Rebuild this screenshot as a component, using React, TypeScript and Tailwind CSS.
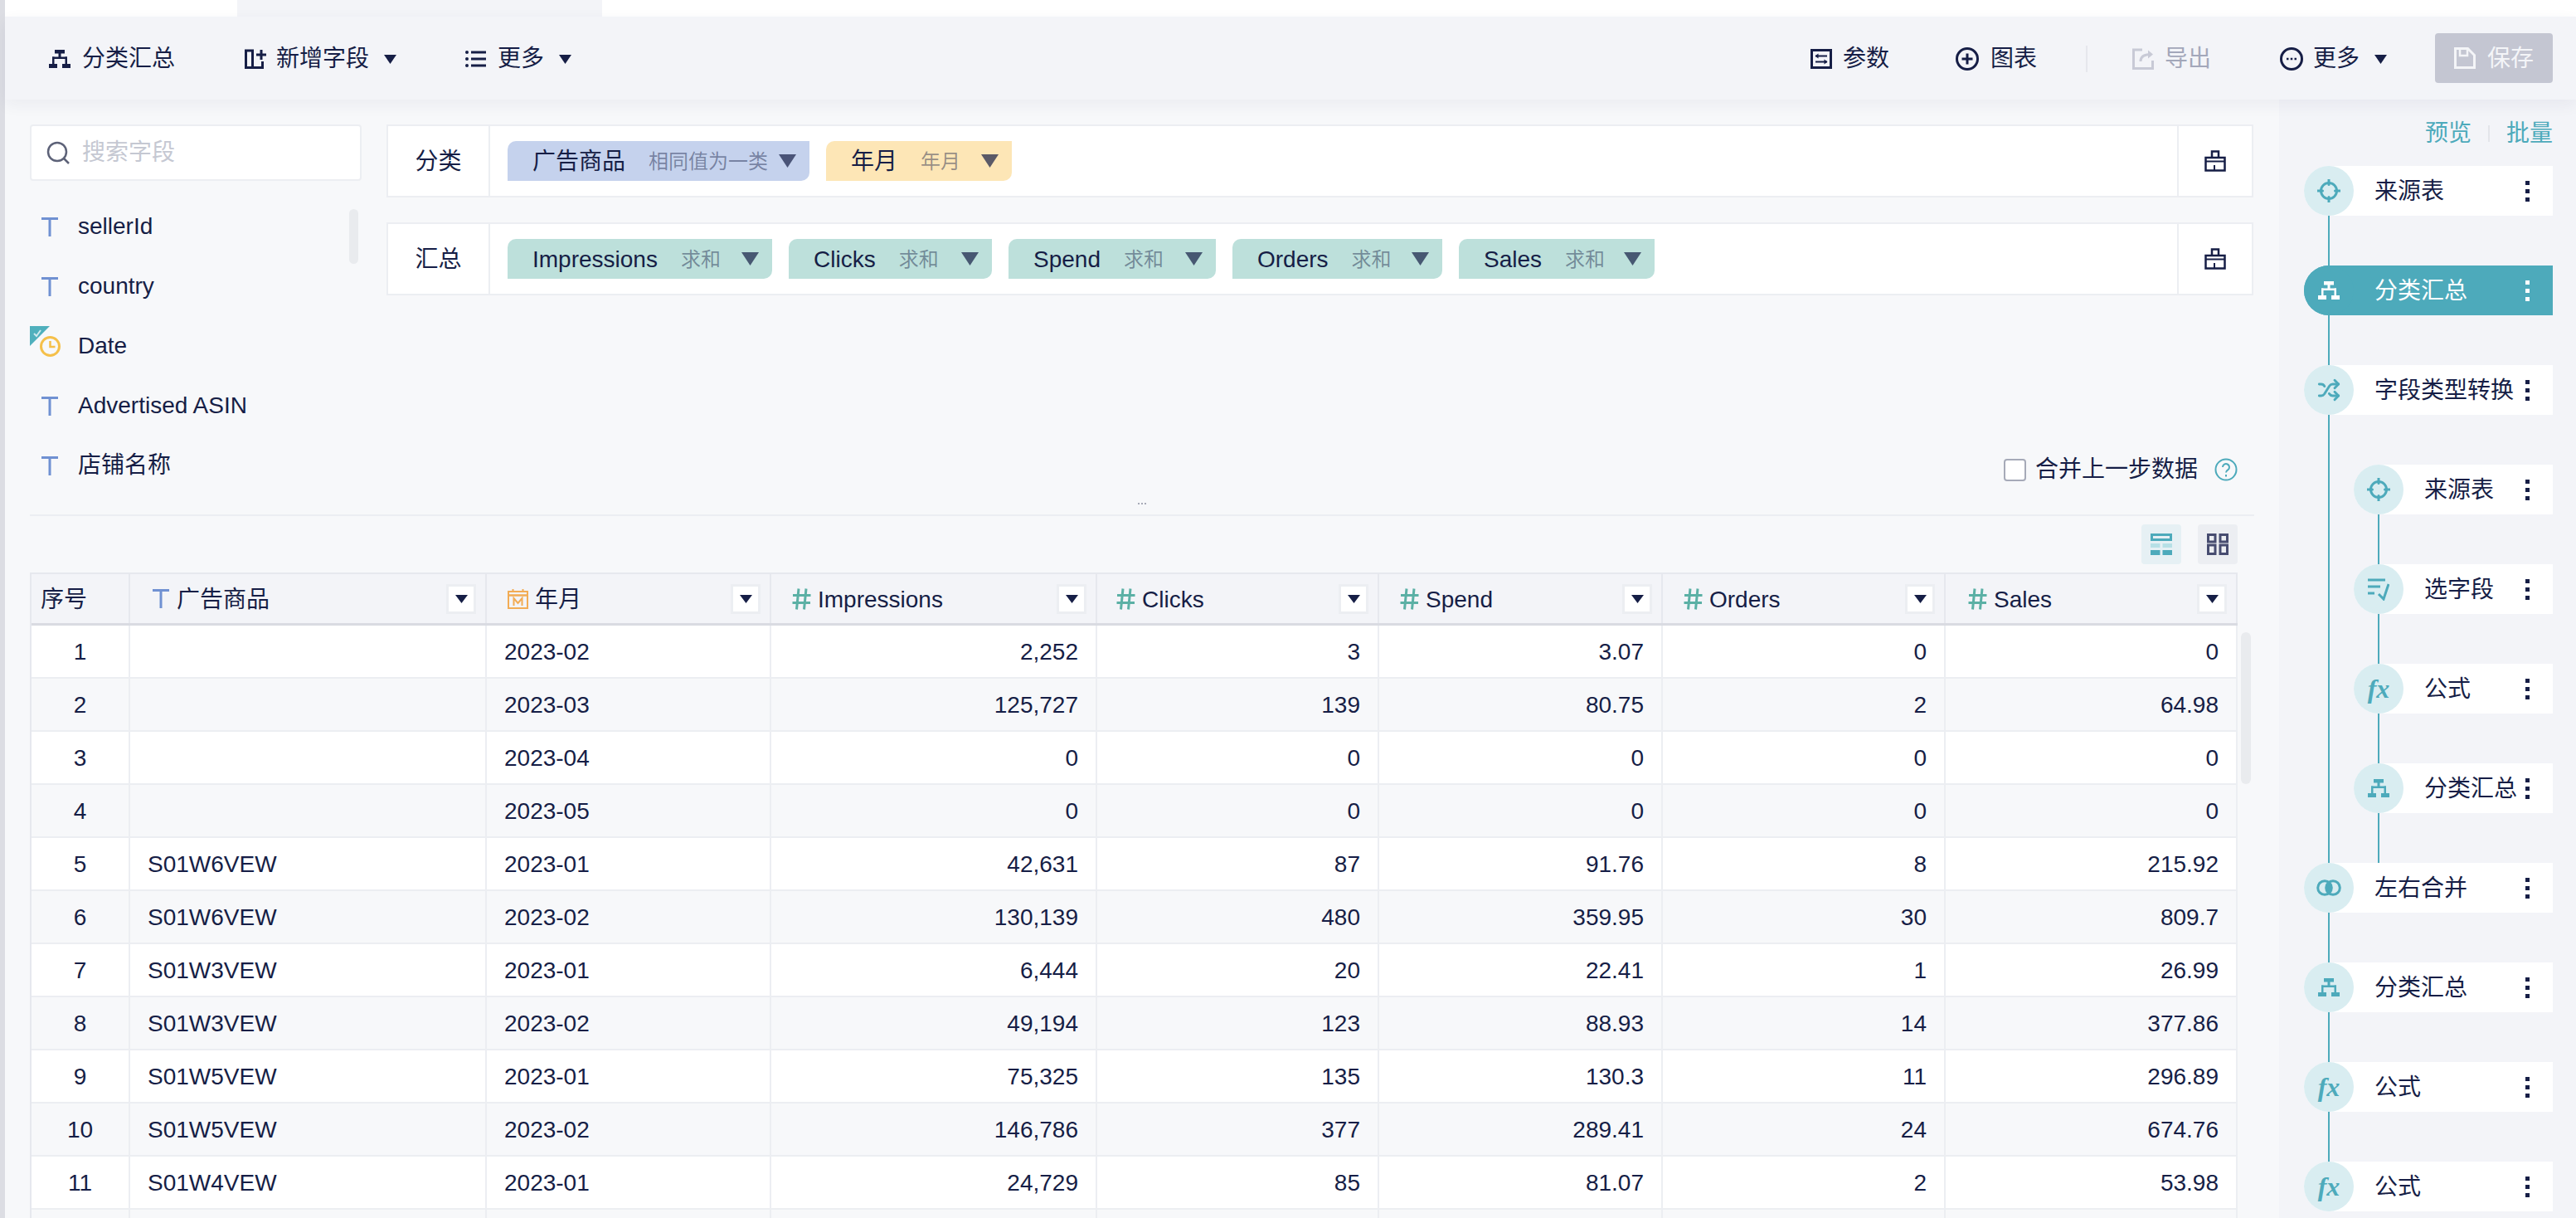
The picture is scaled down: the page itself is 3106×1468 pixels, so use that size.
import type { ReactNode } from 'react';
import { Shuffle } from 'lucide-react';

type ChipDef = { label: string; sub: string; width: string };

const groupChips: { label: string; sub: string; width: string; bg: string }[] = [
  { label: '广告商品', sub: '相同值为一类', width: 'w-[364px]', bg: 'bg-[#c5d2ed]' },
  { label: '年月', sub: '年月', width: 'w-[224px]', bg: 'bg-[#fde6b6]' },
];

const sumChips: ChipDef[] = [
  { label: 'Impressions', sub: '求和', width: 'w-[319px]' },
  { label: 'Clicks', sub: '求和', width: 'w-[245px]' },
  { label: 'Spend', sub: '求和', width: 'w-[250px]' },
  { label: 'Orders', sub: '求和', width: 'w-[253px]' },
  { label: 'Sales', sub: '求和', width: 'w-[236px]' },
];

const rows: string[][] = [
  ['1', '', '2023-02', '2,252', '3', '3.07', '0', '0'],
  ['2', '', '2023-03', '125,727', '139', '80.75', '2', '64.98'],
  ['3', '', '2023-04', '0', '0', '0', '0', '0'],
  ['4', '', '2023-05', '0', '0', '0', '0', '0'],
  ['5', 'S01W6VEW', '2023-01', '42,631', '87', '91.76', '8', '215.92'],
  ['6', 'S01W6VEW', '2023-02', '130,139', '480', '359.95', '30', '809.7'],
  ['7', 'S01W3VEW', '2023-01', '6,444', '20', '22.41', '1', '26.99'],
  ['8', 'S01W3VEW', '2023-02', '49,194', '123', '88.93', '14', '377.86'],
  ['9', 'S01W5VEW', '2023-01', '75,325', '135', '130.3', '11', '296.89'],
  ['10', 'S01W5VEW', '2023-02', '146,786', '377', '289.41', '24', '674.76'],
  ['11', 'S01W4VEW', '2023-01', '24,729', '85', '81.07', '2', '53.98'],
  ['', '', '', '', '', '', '', ''],
];

const gridCols = 'grid grid-cols-[119px_430px_343px_393px_340px_342px_341px_352px]';

function Tri({ className = 'w-[15px] h-[11px]', opacity = 1 }: { className?: string; opacity?: number }) {
  return (
    <svg viewBox="0 0 15 11" preserveAspectRatio="none" className={className} fill="currentColor" opacity={opacity}>
      <path d="M0 0h15L7.5 11z" />
    </svg>
  );
}

function TreeIcon({ className = 'w-[26px] h-[22px]' }: { className?: string }) {
  return (
    <svg viewBox="0 0 26 22" className={className} fill="currentColor">
      <rect x="7" y="0" width="12" height="4.5" />
      <rect x="11.5" y="4" width="3" height="6" />
      <rect x="4" y="8.5" width="18" height="2.5" />
      <rect x="4" y="8.5" width="2.5" height="9" />
      <rect x="19.5" y="8.5" width="2.5" height="9" />
      <rect x="0" y="17" width="10" height="5" />
      <rect x="16" y="17" width="10" height="5" />
    </svg>
  );
}

function AddFieldIcon() {
  return (
    <svg viewBox="0 0 26 24" className="w-[26px] h-[24px]" fill="none" stroke="currentColor" strokeWidth="3">
      <path d="M1.500 2h8v20.500h-8zM9.500 22.500H21.500V15" />
      <path d="M14 7h12M20 1v12" />
    </svg>
  );
}

function ListIcon() {
  return (
    <svg viewBox="0 0 25 24" className="w-[25px] h-[24px]" fill="currentColor">
      <rect x="0" y="2" width="4" height="4" rx="2" />
      <rect x="7" y="2.500" width="18" height="3" />
      <rect x="0" y="10" width="4" height="4" rx="2" />
      <rect x="7" y="10.500" width="18" height="3" />
      <rect x="0" y="18" width="4" height="4" rx="2" />
      <rect x="7" y="18.500" width="18" height="3" />
    </svg>
  );
}

function ParamIcon() {
  return (
    <svg viewBox="0 0 26 24" className="w-[26px] h-[24px]" fill="none" stroke="currentColor" strokeWidth="3">
      <rect x="1.500" y="1.500" width="23" height="21" />
      <path d="M6 8.500h14M6 15.500h14" strokeWidth="2" />
      <path d="M9.500 5.500v6L5.500 8.500zM16.500 12.500v6l4-3z" fill="currentColor" stroke="none" />
    </svg>
  );
}

function PlusCircleIcon() {
  return (
    <svg viewBox="0 0 28 28" className="w-[28px] h-[28px]" fill="none" stroke="currentColor" strokeWidth="3">
      <circle cx="14" cy="14" r="12.500" />
      <path d="M7.500 14h13M14 7.500v13" />
    </svg>
  );
}

function ExportIcon() {
  return (
    <svg viewBox="0 0 26 26" className="w-[26px] h-[26px]" fill="none" stroke="#c8cad6" strokeWidth="3">
      <path d="M12 2H1.500v22.500h23V15" />
      <path d="M10 16c0-6 4-8.500 12-8.500" />
      <path d="M19 2.500l6 5-6 5" fill="#c8cad6" stroke="none" />
    </svg>
  );
}

function DotsCircleIcon() {
  return (
    <svg viewBox="0 0 28 28" className="w-[28px] h-[28px]" fill="none" stroke="currentColor" strokeWidth="3">
      <circle cx="14" cy="14" r="12.500" />
      <path d="M8 14h2.500M12.750 14h2.500M17.500 14H20" strokeWidth="2.500" />
    </svg>
  );
}

function SaveIcon() {
  return (
    <svg viewBox="0 0 26 26" className="w-[26px] h-[26px]" fill="none" stroke="#f4f5f8" strokeWidth="3">
      <path d="M1.500 1.500h15l8 8v15h-23z" />
      <path d="M7 2v8h9V2" strokeWidth="2.500" />
    </svg>
  );
}

function BroomIcon() {
  return (
    <svg viewBox="0 0 26 26" className="w-[26px] h-[26px]" fill="none" stroke="#161e46" strokeWidth="2.500">
      <path d="M9 9V1.500h8V9" />
      <path d="M1.500 9h23v15.500h-23z" />
      <path d="M1.500 13.500h23" strokeWidth="2" />
      <path d="M12 24v-6" strokeWidth="2" />
    </svg>
  );
}

function TypeT({ className = 'w-[20px] h-[23px]' }: { className?: string }) {
  return (
    <svg viewBox="0 0 20 23" className={className} fill="#7091d2">
      <rect x="0" y="0" width="20" height="3" />
      <rect x="8.500" y="0" width="3" height="23" />
    </svg>
  );
}

function HashIcon() {
  return (
    <svg viewBox="0 0 23 26" className="w-[23px] h-[26px]" fill="none" stroke="#5bb0a5" strokeWidth="3">
      <path d="M8 0.500L5.500 25.500M17 0.500L14.500 25.500M1 8.500h21.500M0.500 17.500H22" />
    </svg>
  );
}

function CalendarIcon() {
  return (
    <svg viewBox="0 0 25 24" className="w-[25px] h-[24px]" fill="none" stroke="#f2ac55" strokeWidth="2">
      <rect x="1" y="3" width="23" height="20" />
      <path d="M1 7.500h23" strokeWidth="2.500" />
      <path d="M6.500 0v4M18.500 0v4" />
      <path d="M7.500 20v-9l5 6 5-6v9" />
    </svg>
  );
}

function TargetIcon() {
  return (
    <svg viewBox="0 0 28 28" className="w-[28px] h-[28px]" fill="none" stroke="#4daabb" strokeWidth="3">
      <circle cx="14" cy="14" r="9.500" />
      <path d="M14 0.500v6M14 21.500v6M0.500 14h6M21.500 14h6" strokeLinecap="round" />
    </svg>
  );
}

function SelectFieldIcon() {
  return (
    <svg viewBox="0 0 26 28" className="w-[26px] h-[28px]" fill="none" stroke="#4daabb" strokeWidth="3">
      <path d="M0 3h21M0 11h15M0 19h8" />
      <path d="M13 20l6 6 6-18" />
    </svg>
  );
}

function MergeIcon() {
  return (
    <svg viewBox="0 0 30 20" className="w-[30px] h-[20px]" fill="none" stroke="#4daabb" strokeWidth="3">
      <path d="M15 3.500a8 8 0 0 1 0 13a8 8 0 0 1 0-13z" fill="#4daabb" stroke="none" />
      <circle cx="10" cy="10" r="8.300" />
      <circle cx="20" cy="10" r="8.300" />
    </svg>
  );
}

function FxIcon() {
  return <span className="text-[#4daabb] italic font-bold text-[32px] leading-none font-['Liberation_Serif',serif]">fx</span>;
}

function Node({
  label,
  icon,
  active = false,
  sub = false,
}: {
  label: string;
  icon: ReactNode;
  active?: boolean;
  sub?: boolean;
}) {
  return (
    <div
      className={`relative flex h-[60px] items-center rounded-l-full rounded-r-[4px] pr-[28px] ${sub ? 'ml-[60px]' : ''} ${
        active ? 'bg-[#4daabb] text-white' : 'bg-white text-[#161e46]'
      }`}
    >
      <span
        className={`flex h-[60px] w-[60px] shrink-0 items-center justify-center rounded-full ${
          active ? 'bg-[#4daabb] text-white' : 'bg-[#d9edf1] text-[#4daabb]'
        }`}
      >
        {icon}
      </span>
      <span className="ml-[25px] flex-1 whitespace-nowrap pt-[2px]">{label}</span>
      <span className={`flex flex-col gap-[5px] ${active ? 'text-white' : 'text-[#161e46]'}`}>
        <i className="block h-[5px] w-[5px] bg-current" />
        <i className="block h-[5px] w-[5px] bg-current" />
        <i className="block h-[5px] w-[5px] bg-current" />
      </span>
    </div>
  );
}

function Chip({ label, sub, width, bg }: { label: string; sub: string; width: string; bg: string }) {
  return (
    <div className={`flex h-[48px] items-center rounded-tl-[10px] rounded-br-[10px] pl-[30px] pr-[16px] ${width} ${bg}`}>
      <span className="whitespace-nowrap pt-[2px] text-[#161e46]">{label}</span>
      <span className="ml-[28px] whitespace-nowrap pt-[2px] text-[24px] text-[#161e46]/45">{sub}</span>
      <span className="ml-auto text-[#161e46]/70">
        <Tri className="block h-[16px] w-[21px]" />
      </span>
    </div>
  );
}

function DropPanel({ title, children }: { title: string; children: ReactNode }) {
  return (
    <div className="flex h-[88px] border-2 border-[#eceef2] bg-white">
      <div className="flex w-[123px] shrink-0 items-center justify-center border-r-2 border-[#eceef2] pt-[2px]">{title}</div>
      <div className="flex flex-1 items-center gap-[20px] pl-[21px]">{children}</div>
      <div className="flex w-[90px] shrink-0 items-center justify-center border-l-2 border-[#eceef2]">
        <BroomIcon />
      </div>
    </div>
  );
}

function FieldRow({ label, icon }: { label: string; icon: ReactNode }) {
  return (
    <div className="flex h-[72px] items-center">
      <span className="flex w-[58px] shrink-0 justify-start pl-[14px]">{icon}</span>
      <span>{label}</span>
    </div>
  );
}

function HeadCell({ icon, label, pl }: { icon: ReactNode; label: string; pl: string }) {
  return (
    <div className={`flex items-center border-r-2 border-[#e6e8ee] pr-[11px] ${pl}`}>
      {icon}
      <span className="ml-[8px] flex-1 pt-[2px]">{label}</span>
      <span className="flex h-[36px] w-[36px] items-center justify-center border-[3px] border-[#eceef2] bg-white">
        <Tri className="block h-[10px] w-[15px]" />
      </span>
    </div>
  );
}

export default function App() {
  return (
    <div className="flex h-[1468px] w-[3106px] overflow-hidden bg-[#f7f8fa] text-[28px] leading-none text-[#161e46] font-['Liberation_Sans','Noto_Sans_CJK_SC',sans-serif]">
      <div className="w-[6px] shrink-0 bg-[#dcdde3]" />
      <div className="flex min-w-0 flex-1 flex-col">
        <div className="flex h-[20px] shrink-0 bg-white">
          <div className="w-[280px]" />
          <div className="w-[440px] bg-[#f3f4f8]" />
        </div>

        <div className="relative z-10 flex h-[100px] shrink-0 items-center bg-[#f3f4f8] pl-[53px] pr-[28px] pt-[2px] shadow-[0_6px_18px_rgba(30,40,80,0.06)]">
          <TreeIcon />
          <span className="ml-[14px]">分类汇总</span>
          <span className="ml-[84px]"><AddFieldIcon /></span>
          <span className="ml-[12px]">新增字段</span>
          <Tri className="ml-[18px] h-[11px] w-[15px]" />
          <span className="ml-[83px]"><ListIcon /></span>
          <span className="ml-[14px]">更多</span>
          <Tri className="ml-[18px] h-[11px] w-[15px]" />

          <span className="ml-auto"><ParamIcon /></span>
          <span className="ml-[13px]">参数</span>
          <span className="ml-[80px]"><PlusCircleIcon /></span>
          <span className="ml-[14px]">图表</span>
          <span className="ml-[59px] h-[32px] w-[2px] bg-[#e6e7ed]" />
          <span className="ml-[54px]"><ExportIcon /></span>
          <span className="ml-[13px] text-[#a3a7ba]">导出</span>
          <span className="ml-[83px]"><DotsCircleIcon /></span>
          <span className="ml-[12px]">更多</span>
          <Tri className="ml-[18px] h-[11px] w-[15px]" />
          <div className="-mt-[2px] ml-[58px] flex h-[60px] w-[142px] items-center justify-center gap-[14px] rounded-[4px] bg-[#c4c6d2] text-[#f4f5f8]">
            <SaveIcon />
            <span className="pt-[2px]">保存</span>
          </div>
        </div>

        <div className="flex min-h-0 flex-1">
          <div className="w-[2742px] shrink-0 pl-[30px] pt-[30px]">
            <div className="relative flex h-[472px] w-[2682px] gap-[30px] border-b-2 border-[#eceef2]">
              <div className="w-[400px] shrink-0">
                <div className="flex h-[68px] items-center rounded-[4px] border-2 border-[#eceef2] bg-white pl-[18px] text-[#c5c8d2]">
                  <svg viewBox="0 0 28 28" className="h-[28px] w-[28px]" fill="none" stroke="#5d6278" strokeWidth="2.500">
                    <circle cx="13" cy="13" r="11" />
                    <path d="M21 21l6 6" />
                  </svg>
                  <span className="ml-[15px]">搜索字段</span>
                </div>
                <div className="relative mt-[19px]">
                  <FieldRow label="sellerId" icon={<TypeT />} />
                  <FieldRow label="country" icon={<TypeT />} />
                  <div className="flex h-[72px] items-center">
                    <span className="relative flex w-[58px] shrink-0 pl-[12px]">
                      <svg viewBox="0 0 24 24" className="absolute left-0 -top-[12px] h-[24px] w-[24px]">
                        <path d="M0 0h24L0 24z" fill="#4fb0bd" />
                        <path d="M5 9l3 3 5-7" fill="none" stroke="#cfe9ee" strokeWidth="2" />
                      </svg>
                      <svg viewBox="0 0 25 25" className="relative h-[25px] w-[25px]" fill="#f7f8fa" stroke="#f5c04a" strokeWidth="3">
                        <circle cx="12.500" cy="12.500" r="11" />
                        <path d="M12.500 6v7h6" fill="none" strokeWidth="2.500" />
                      </svg>
                    </span>
                    <span>Date</span>
                  </div>
                  <FieldRow label="Advertised ASIN" icon={<TypeT />} />
                  <FieldRow label="店铺名称" icon={<TypeT />} />
                  <div className="absolute left-[385px] top-[15px] h-[66px] w-[11px] rounded-full bg-[#e9ebee]" />
                </div>
              </div>

              <div className="w-[2251px] shrink-0">
                <DropPanel title="分类">
                  {groupChips.map((c) => (
                    <Chip key={c.label} {...c} />
                  ))}
                </DropPanel>
                <div className="mt-[30px]">
                  <DropPanel title="汇总">
                    {sumChips.map((c) => (
                      <Chip key={c.label} {...c} bg="bg-[#bde0db]" />
                    ))}
                  </DropPanel>
                </div>
                <div className="mt-[196px] flex items-center justify-end pr-[19px]">
                  <span className="h-[27px] w-[27px] rounded-[4px] border-2 border-[#a6aab8] bg-white" />
                  <span className="ml-[11px]">合并上一步数据</span>
                  <svg viewBox="0 0 28 28" className="ml-[20px] h-[28px] w-[28px]" fill="none" stroke="#4daabb" strokeWidth="2">
                    <circle cx="14" cy="14" r="12.500" />
                    <path d="M10 11a4 4 0 1 1 6.500 3.200c-1.500 1-2.500 1.800-2.500 3.300" />
                    <path d="M14 20v2.500" />
                  </svg>
                </div>
              </div>

              <span className="absolute bottom-[12px] left-[1336px] flex gap-[2px]">
                <i className="block h-[2px] w-[2px] bg-[#a7abb8]" />
                <i className="block h-[2px] w-[2px] bg-[#a7abb8]" />
                <i className="block h-[2px] w-[2px] bg-[#a7abb8]" />
              </span>
            </div>

            <div className="flex w-[2662px] justify-end gap-[20px] pb-[10px] pt-[10px]">
              <div className="flex h-[48px] w-[48px] items-center justify-center rounded-[4px] bg-[#e6f0f4]">
                <svg viewBox="0 0 26 26" className="h-[26px] w-[26px]" fill="#4daabb">
                  <path d="M0 0h26v9H0zM3 3v3h20V3z" fillRule="evenodd" />
                  <rect x="0" y="12" width="11.500" height="5" fill="#b7e0e6" />
                  <rect x="14.500" y="12" width="11.500" height="5" fill="#b7e0e6" />
                  <rect x="0" y="20" width="11.500" height="6" />
                  <rect x="14.500" y="20" width="11.500" height="6" />
                </svg>
              </div>
              <div className="flex h-[48px] w-[48px] items-center justify-center rounded-[4px] bg-[#eceef2]">
                <svg viewBox="0 0 26 26" className="h-[26px] w-[26px]" fill="none" stroke="#474c70" strokeWidth="3">
                  <rect x="1.500" y="1.500" width="8.500" height="8.500" />
                  <rect x="16" y="1.500" width="8.500" height="8.500" />
                  <rect x="1.500" y="14" width="8.500" height="10.500" />
                  <rect x="16" y="14" width="8.500" height="10.500" />
                </svg>
              </div>
            </div>

            <div className="relative w-[2662px]">
              <div className="border-l-2 border-t-2 border-[#e6e8ee]">
                <div className={`${gridCols} h-[62px] border-b-[3px] border-[#d9dbe2] bg-[#f3f4f8]`}>
                  <div className="flex items-center border-r-2 border-[#e6e8ee] pl-[11px] pt-[2px]">序号</div>
                  <HeadCell icon={<TypeT className="h-[23px] w-[22px]" />} label="广告商品" pl="pl-[26px]" />
                  <HeadCell icon={<CalendarIcon />} label="年月" pl="pl-[25px]" />
                  <HeadCell icon={<HashIcon />} label="Impressions" pl="pl-[25px]" />
                  <HeadCell icon={<HashIcon />} label="Clicks" pl="pl-[23px]" />
                  <HeadCell icon={<HashIcon />} label="Spend" pl="pl-[25px]" />
                  <HeadCell icon={<HashIcon />} label="Orders" pl="pl-[25px]" />
                  <HeadCell icon={<HashIcon />} label="Sales" pl="pl-[27px]" />
                </div>
                {rows.map((row, i) => (
                  <div
                    key={i}
                    className={`${gridCols} h-[64px] border-b-2 border-[#eceef2] ${i % 2 === 0 ? 'bg-white' : 'bg-[#f7f8fa]'}`}
                  >
                    {row.map((cell, j) => (
                      <div
                        key={j}
                        className={`flex items-center border-r-2 border-[#eceef2] pt-[2px] ${
                          j === 0 ? 'justify-center' : j < 3 ? 'pl-[21px]' : 'justify-end pr-[21px]'
                        }`}
                      >
                        {cell}
                      </div>
                    ))}
                  </div>
                ))}
              </div>
              <div className="absolute left-[2666px] top-[72px] h-[183px] w-[12px] rounded-full bg-[#e9ebee]" />
            </div>
          </div>

          <div className="w-[358px] shrink-0 bg-[#f3f4f8] pl-[30px] pr-[28px]">
            <div className="flex h-[80px] items-center justify-end pt-[2px] text-[#4daabb]">
              <span>预览</span>
              <span className="mx-[20px] h-[20px] w-[2px] bg-[#e3e5ea]" />
              <span>批量</span>
            </div>
            <div className="relative flex flex-col gap-[60px]">
              <div className="absolute bottom-0 left-[29px] top-[60px] w-[2px] bg-[#4daabb]" />
              <Node label="来源表" icon={<TargetIcon />} />
              <Node label="分类汇总" icon={<TreeIcon />} active />
              <Node label="字段类型转换" icon={<Shuffle size={28} strokeWidth={2.5} />} />
              <div className="relative flex flex-col gap-[60px]">
                <div className="absolute -bottom-[60px] left-[89px] top-[30px] w-[2px] bg-[#4daabb]" />
                <Node sub label="来源表" icon={<TargetIcon />} />
                <Node sub label="选字段" icon={<SelectFieldIcon />} />
                <Node sub label="公式" icon={<FxIcon />} />
                <Node sub label="分类汇总" icon={<TreeIcon />} />
              </div>
              <Node label="左右合并" icon={<MergeIcon />} />
              <Node label="分类汇总" icon={<TreeIcon />} />
              <Node label="公式" icon={<FxIcon />} />
              <Node label="公式" icon={<FxIcon />} />
            </div>
          </div>
        </div>
      </div>
    </div>
  );
}
